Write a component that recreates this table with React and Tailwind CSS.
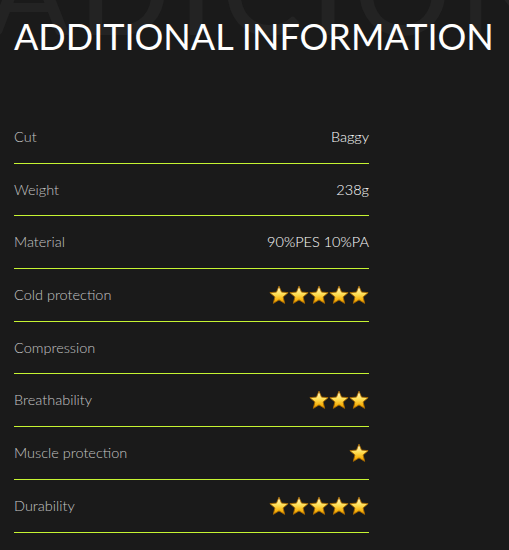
import React from "react";

const rows = [
  { label: "Cut", value: "Baggy" },
  { label: "Weight", value: "238g" },
  { label: "Material", value: "90%PES 10%PA" },
  { label: "Cold protection", stars: 5 },
  { label: "Compression" },
  { label: "Breathability", stars: 3 },
  { label: "Muscle protection", stars: 1 },
  { label: "Durability", stars: 5 },
];

function Star({ id }) {
  return (
    <svg width="20" height="20" viewBox="0 0 20 20" className="block">
      <defs>
        <linearGradient id={id} x1="0" y1="0" x2="0" y2="1">
          <stop offset="0" stopColor="#fffbe0" />
          <stop offset="0.45" stopColor="#ffe15a" />
          <stop offset="0.8" stopColor="#f7b20c" />
          <stop offset="1" stopColor="#e89400" />
        </linearGradient>
      </defs>
      <path
        d="M10 1.2 L12.53 7.12 L19.13 7.63 L14.09 11.93 L15.64 18.37 L10 14.9 L4.36 18.37 L5.91 11.93 L0.87 7.63 L7.47 7.12 Z"
        fill={`url(#${id})`}
        stroke="#a86a00"
        strokeWidth="0.9"
        strokeLinejoin="round"
      />
    </svg>
  );
}

export default function App() {
  return (
    <div
      className="relative w-[509px] h-[550px] overflow-hidden bg-[#1a1a1a]"
      style={{ fontFamily: "Lato, 'Noto Sans', sans-serif" }}
    >
      <div
        aria-hidden="true"
        className="absolute left-[-12px] top-[-71px] text-[120px] leading-none font-medium text-[#232323] whitespace-nowrap select-none tracking-[9px]"
      >
        ADICIONAL
      </div>
      <div className="relative">
        <h2 className="pt-[17px] pl-[14px] text-[36px] leading-[38px] font-normal text-white whitespace-nowrap tracking-[0px]">
          ADDITIONAL INFORMATION
        </h2>
        <div className="mt-[56px] ml-[14px] w-[355px]">
          {rows.map((r, i) => (
            <div
              key={i}
              className="flex h-[52.7px] items-center justify-between border-b border-[#c6f432] box-border"
            >
              <span className="text-[14.5px] font-light text-[#c4c4c4]">{r.label}</span>
              {r.value && (
                <span className="text-[14.5px] font-light text-white">{r.value}</span>
              )}
              {r.stars && (
                <span className="flex">
                  {Array.from({ length: r.stars }).map((_, j) => (
                    <Star key={j} id={`g${i}_${j}`} />
                  ))}
                </span>
              )}
            </div>
          ))}
        </div>
      </div>
    </div>
  );
}
